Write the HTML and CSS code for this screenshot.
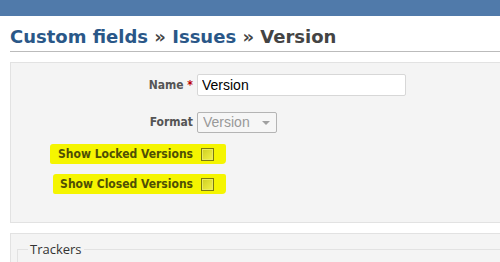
FILE: index.html
```html
<!DOCTYPE html>
<html lang="en">
<head>
	<meta charset="UTF-8">
	<title>Custom fields - Version</title>
	<link rel="stylesheet" href="styles.css">
</head>
<body>
	<div class="top-bar"></div>
	<div class="content">
		<h2 class="title"><a href="#">Custom fields</a> &raquo; <a href="#">Issues</a> &raquo; Version</h2>
		<div class="box">
			<div class="row row-name">
				<label class="lbl" for="name">Name <span class="req">*</span></label>
				<input type="text" id="name" class="text-field" value="Version">
			</div>
			<div class="row row-format">
				<label class="lbl" for="format">Format</label>
				<span class="select-wrap">
					<select id="format" class="select-field" disabled>
						<option>Version</option>
					</select>
				</span>
			</div>
			<div class="row check-row mark-one">
				<label class="lbl" for="locked">Show Locked Versions</label>
				<input type="checkbox" id="locked" class="check">
			</div>
			<div class="row check-row mark-two">
				<label class="lbl" for="closed">Show Closed Versions</label>
				<input type="checkbox" id="closed" class="check">
			</div>
		</div>
		<div class="box box-trackers">
			<fieldset class="trackers">
				<legend>Trackers</legend>
			</fieldset>
		</div>
	</div>
</body>
</html>
```

FILE: styles.css
```css
html, body {
	margin: 0;
	overflow: hidden;
	background: #fff;
}

body {
	font-family: "DejaVu Sans Condensed", "DejaVu Sans", Tahoma, sans-serif;
	font-size: 12px;
	color: #555;
}

.top-bar {
	height: 16px;
	background: #507aaa;
}

.content {
	width: 520px;
	height: 246px;
	padding: 0 0 0 10px;
}

.title {
	margin: 10px 0 10px;
	padding: 0 0 3px;
	font-family: "DejaVu Sans", Verdana, sans-serif;
	font-size: 18px;
	line-height: 22px;
	font-weight: bold;
	color: #444;
	border-bottom: 1px solid #bbb;
}

.title a {
	color: #2a5788;
	text-decoration: none;
}

.box {
	background: #f4f4f4;
	border: 1px solid #e2e2e2;
	padding: 11px 0 27px;
	margin-bottom: 10px;
}

.row {
	position: relative;
	z-index: 0;
	display: grid;
	grid-template-columns: 182px auto;
	align-items: center;
	column-gap: 4px;
	height: 22px;
}

.row-format {
	margin-top: 15px;
}

.lbl {
	font-weight: bold;
	text-align: right;
}

.req {
	color: #bb0000;
}

.text-field {
	box-sizing: border-box;
	width: 209px;
	height: 22px;
	border: 1px solid #d7d7d7;
	border-radius: 2px;
	padding: 0 4px;
	font-family: "Liberation Sans", Arial, sans-serif;
	font-size: 14px;
	color: #000;
	background: #fff;
}

.select-wrap {
	position: relative;
	width: 80px;
	height: 21px;
}

.select-wrap::after {
	content: "";
	position: absolute;
	right: 7px;
	top: 9px;
	border-left: 4px solid transparent;
	border-right: 4px solid transparent;
	border-top: 4px solid #a0a0a0;
}

.select-field {
	appearance: none;
	box-sizing: border-box;
	width: 80px;
	height: 21px;
	border: 1px solid #b4b4b4;
	border-radius: 2px;
	padding: 0 5px;
	font-family: "Liberation Sans", Arial, sans-serif;
	font-size: 14px;
	color: #999;
	background: #f6f6f6;
	opacity: 1;
}

.check-row {
	color: #4f4f05;
}

.check-row::before {
	content: "";
	position: absolute;
	z-index: -1;
	top: 1px;
	height: 20px;
	background: #f5f500;
	border-radius: 3px 2px 4px 2px;
}

.mark-one {
	margin-top: 10px;
}

.mark-one::before {
	left: 39px;
	width: 176px;
}

.mark-two {
	margin-top: 8px;
}

.mark-two::before {
	left: 42px;
	width: 173px;
}

.check {
	appearance: none;
	margin: 0 0 0 4px;
	width: 13px;
	height: 13px;
	border: 1px solid #7a7a10;
	background: linear-gradient(135deg, #cfcf20, #f2f24a);
	box-shadow: inset 0 0 0 1px #eaea60;
}

.box-trackers {
	height: 60px;
	padding: 6px 6px;
}

.trackers {
	margin: 0;
	border: 1px solid #e2e2e2;
	border-right: none;
	padding: 0 10px;
	height: 40px;
}

.trackers legend {
	font-family: "Open Sans", sans-serif;
	font-size: 13px;
	color: #333;
	padding: 0 2px;
}
```
